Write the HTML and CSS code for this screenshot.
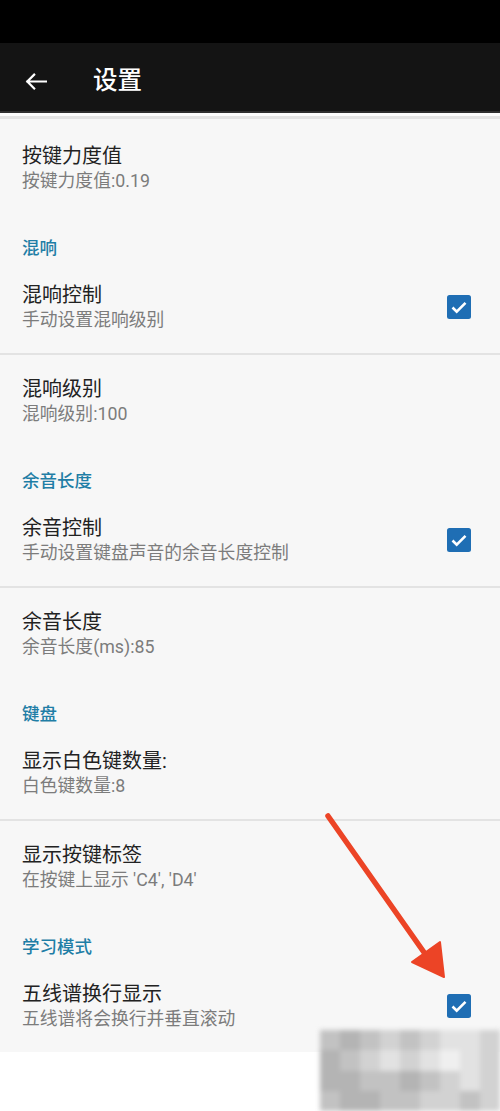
FILE: index.html
```html
<!DOCTYPE html>
<html lang="zh-CN">
<head>
<meta charset="utf-8">
<title>设置</title>
<link rel="stylesheet" href="styles.css">
</head>
<body>
<div class="status"></div>
<header class="toolbar">
  <svg class="back" viewBox="0 0 24 18" width="22" height="17" aria-hidden="true">
    <path d="M23 9H2.5M10 1.5L2.5 9l7.5 7.5" fill="none" stroke="#fff" stroke-width="2.4" stroke-linecap="square"/>
  </svg>
  <h1 class="title-bar">设置</h1>
</header>
<div class="shade"></div>
<main class="list">
  <section class="group">
    <div class="item"><div class="text"><div class="title">按键力度值</div><div class="summary">按键力度值:0.19</div></div></div>
  </section>
  <section class="group">
    <div class="cat">混响</div>
    <div class="item">
      <div class="text"><div class="title">混响控制</div><div class="summary">手动设置混响级别</div></div>
      <svg class="check" viewBox="0 0 24 24" width="24" height="24"><rect width="24" height="24" rx="2.5" fill="#1f6eb4"/><path d="M5.5 12.5l4.2 4.2 8.8-8.8" fill="none" stroke="#fff" stroke-width="2.6"/></svg>
    </div>
    <div class="item"><div class="text"><div class="title">混响级别</div><div class="summary">混响级别:100</div></div></div>
  </section>
  <section class="group">
    <div class="cat">余音长度</div>
    <div class="item">
      <div class="text"><div class="title">余音控制</div><div class="summary">手动设置键盘声音的余音长度控制</div></div>
      <svg class="check" viewBox="0 0 24 24" width="24" height="24"><rect width="24" height="24" rx="2.5" fill="#1f6eb4"/><path d="M5.5 12.5l4.2 4.2 8.8-8.8" fill="none" stroke="#fff" stroke-width="2.6"/></svg>
    </div>
    <div class="item"><div class="text"><div class="title">余音长度</div><div class="summary">余音长度(ms):85</div></div></div>
  </section>
  <section class="group">
    <div class="cat">键盘</div>
    <div class="item"><div class="text"><div class="title">显示白色键数量:</div><div class="summary">白色键数量:8</div></div></div>
    <div class="item"><div class="text"><div class="title">显示按键标签</div><div class="summary">在按键上显示 'C4', 'D4'</div></div></div>
  </section>
  <section class="group">
    <div class="cat">学习模式</div>
    <div class="item">
      <div class="text"><div class="title">五线谱换行显示</div><div class="summary">五线谱将会换行并垂直滚动</div></div>
      <svg class="check" viewBox="0 0 24 24" width="24" height="24"><rect width="24" height="24" rx="2.5" fill="#1f6eb4"/><path d="M5.5 12.5l4.2 4.2 8.8-8.8" fill="none" stroke="#fff" stroke-width="2.6"/></svg>
    </div>
  </section>
</main>

<svg class="arrow" viewBox="0 0 500 1111" width="500" height="1111" aria-hidden="true">
  <path d="M328 816L428 958" stroke="#ec4426" stroke-width="5.5" stroke-linecap="round"/>
  <path d="M444 977L412 962L440 942Z" fill="#ec4426" stroke="#ec4426" stroke-width="2" stroke-linejoin="round"/>
</svg>

<div class="mosaic" aria-hidden="true">
  <i class="t3"></i><i class="t2"></i><i class="t3"></i><i class="t4"></i><i class="t3"></i><i class="t4"></i><i class="t5"></i><i class="t5"></i><i class="t4"></i>
  <i class="t2"></i><i class="t3"></i><i class="t4"></i><i class="t5"></i><i class="t4"></i><i class="t5"></i><i class="t6"></i><i class="t5"></i><i class="t4"></i>
  <i class="t2"></i><i class="t2"></i><i class="t3"></i><i class="t3"></i><i class="t2"></i><i class="t3"></i><i class="t4"></i><i class="t5"></i><i class="t4"></i>
  <i class="t3"></i><i class="t2"></i><i class="t2"></i><i class="t3"></i><i class="t3"></i><i class="t4"></i><i class="t4"></i><i class="t3"></i><i class="t4"></i>
</div>
</body>
</html>
```

FILE: styles.css
```css
* { box-sizing: border-box; }
html, body { margin: 0; padding: 0; }
body {
  width: 500px;
  min-height: 1111px;
  background: #ffffff;
  font-family: Roboto, "Noto Sans CJK SC", "Noto Sans", sans-serif;
  position: relative;
  overflow: hidden;
}
.status { height: 43px; background: #000; }
.toolbar {
  height: 70px;
  background: #141414;
  display: flex;
  align-items: center;
  padding: 8px 0 0 25px;
  border-bottom: 2px solid #2f2f2f;
}
.back { display: block; flex: none; }
.title-bar {
  margin: 0 0 0 46px;
  color: #fff;
  font-size: 24.5px;
  font-weight: 500;
  line-height: 1;
}
.shade {
  height: 6px;
  background: linear-gradient(#fdfdfd 0 50%, #e4e4e4 50% 100%);
}
.list { background: #f7f7f7; }
.group { display: flex; flex-direction: column; }
.cat {
  color: #1f7ea6;
  font-size: 17.5px;
  font-weight: 500;
  line-height: 20px;
  padding: 24px 22px 1px;
}
.item {
  display: flex;
  align-items: center;
  padding: 23px 29px 21px 22px;
}
.group:first-child .item { padding-top: 24px; }
.item + .item { border-top: 2px solid #e3e3e3; padding-top: 21px; }
.text { flex: 1; min-width: 0; }
.title { color: #222; font-size: 20px; line-height: 26px; }
.summary { color: #7c7c7c; font-size: 17.8px; line-height: 24px; }
.check { display: block; flex: none; }
.arrow { position: absolute; left: 0; top: 0; pointer-events: none; }
.mosaic {
  position: absolute;
  left: 320px;
  top: 1030px;
  width: 180px;
  height: 81px;
  display: grid;
  grid-template-columns: repeat(9, 20px);
  grid-template-rows: repeat(4, 1fr);
  filter: blur(2.5px);
}
.mosaic i { display: block; }
.t2 { background: #b4b4b4; }
.t3 { background: #c2c2c2; }
.t4 { background: #d2d2d2; }
.t5 { background: #e2e2e2; }
.t6 { background: #efefef; }
```
